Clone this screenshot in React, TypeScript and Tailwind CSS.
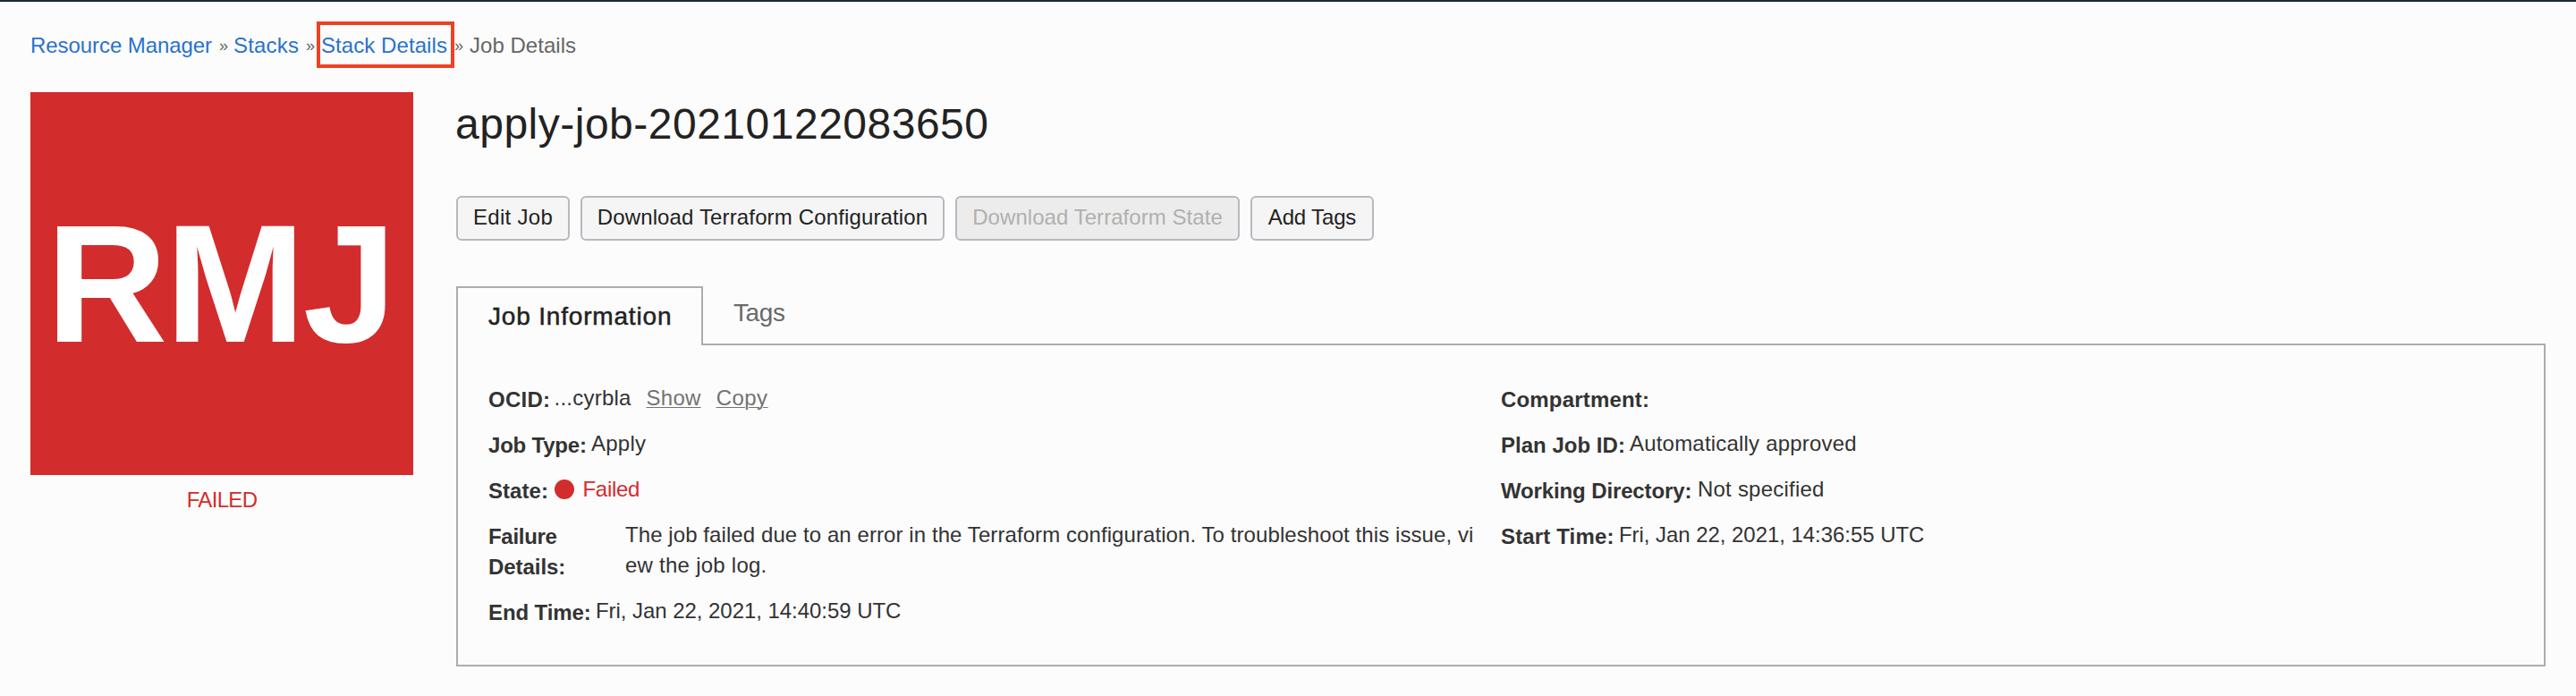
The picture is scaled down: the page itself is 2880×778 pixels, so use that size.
import React from "react";

function Separator() {
  return <span className="text-[18px]">»</span>;
}

function Breadcrumb() {
  return (
    <nav className="ml-[34px] mt-8 grid h-[34px] grid-cols-[211px_16px_81px_17px_149px_17px_auto] whitespace-nowrap text-[#666]">
      <a className="tracking-[-0.07px] text-[#2a72cc]">Resource Manager</a>
      <Separator />
      <a className="tracking-[0.19px] text-[#2a72cc]">Stacks</a>
      <Separator />
      <a className="relative tracking-[0.07px] text-[#2a72cc]">
        Stack Details
        <span className="absolute -left-[5px] -top-2.5 h-[52px] w-[154px] border-4 border-[#ee4124]" />
      </a>
      <Separator />
      <span className="tracking-[0.03px]">Job Details</span>
    </nav>
  );
}

function Button({ label, className, disabled }: { label: string; className: string; disabled?: boolean }) {
  const tone = disabled ? "bg-[#ececec] text-[#b0b0b0]" : "bg-[#f5f5f5] text-[#222]";
  return (
    <button
      disabled={disabled}
      className={`flex h-[50px] items-start justify-center whitespace-nowrap rounded-[6px] border-2 border-[#b5bac0] pt-[5px] ${tone} ${className}`}
    >
      {label}
    </button>
  );
}

function Row({ label, labelClass, children }: { label: React.ReactNode; labelClass: string; children?: React.ReactNode }) {
  return (
    <div className="flex pb-[15px]">
      <div className={`shrink-0 whitespace-nowrap pt-0.5 font-bold ${labelClass}`}>{label}</div>
      <div className="whitespace-nowrap">{children}</div>
    </div>
  );
}

export default function App() {
  return (
    <div className="h-[778px] w-[2880px] overflow-hidden border-t-2 border-[#1f2a37] bg-[#fcfcfc] font-['Liberation_Sans',Arial,sans-serif] text-[24px] leading-[34px] text-[#333]">
      <Breadcrumb />
      <main className="mt-[35px] flex gap-12 pl-[34px] pr-[34px]">
        <aside className="w-[428px] shrink-0">
          <div className="flex h-[428px] items-center bg-[#d32c2c] pl-[17.5px]">
            <span className="text-[188px] font-bold leading-[200px] tracking-[-2.6px] text-white">RMJ</span>
          </div>
          <div className="mt-[11px] text-center tracking-[-0.67px] text-[#d32c2c]">FAILED</div>
        </aside>

        <section className="min-w-0 flex-1">
          <h1 className="-ml-px mt-[6px] text-[48px] leading-[60px] tracking-[0.5px] text-[#222]">
            apply-job-20210122083650
          </h1>

          <div className="mt-[50px] flex gap-3">
            <Button label="Edit Job" className="w-[127px] tracking-[0.3px]" />
            <Button label="Download Terraform Configuration" className="w-[407px] tracking-[0.14px]" />
            <Button label="Download Terraform State" className="w-[318px] tracking-[0.05px]" disabled />
            <Button label="Add Tags" className="w-[138px] tracking-[-0.15px]" />
          </div>

          <div className="mt-[51px] flex">
            <div className="relative -mb-0.5 h-[66px] w-[276px] border-2 border-b-0 border-[#adadad] bg-[#fcfcfc] pl-[34px] pt-[14px] text-[28px] leading-[36px] tracking-[0.82px] text-[#222] [-webkit-text-stroke:0.5px_#222]">
              Job Information
            </div>
            <div className="pl-[34px] pt-3 text-[28px] leading-[36px] tracking-[-0.38px] text-[#6a6a6a]">Tags</div>
          </div>

          <div className="flex h-[361px] border-2 border-[#adadad] pl-[34px] pt-[42px]">
            <div className="w-[1132px] shrink-0">
              <Row label="OCID:" labelClass="w-[73.5px] tracking-[0.25px]">
                <div className="flex">
                  <span className="w-[103px] tracking-[0.23px]">...cyrbla</span>
                  <a className="mr-[17px] tracking-[0.27px] text-[#737373] underline decoration-1 underline-offset-2">Show</a>
                  <a className="tracking-[0.49px] text-[#737373] underline decoration-1 underline-offset-2">Copy</a>
                </div>
              </Row>
              <Row label="Job Type:" labelClass="w-[115px] tracking-[-0.2px]">
                <span className="tracking-[0.24px]">Apply</span>
              </Row>
              <Row label="State:" labelClass="w-[74px] tracking-[0.06px]">
                <div className="flex text-[#d32c2c]">
                  <span className="mr-[9.5px] mt-[6px] size-[22px] rounded-full bg-[#d32c2c]" />
                  <span className="tracking-[-0.3px]">Failed</span>
                </div>
              </Row>
              <Row
                label={
                  <>
                    <span className="tracking-[-0.3px]">Failure</span>
                    <br />
                    Details:
                  </>
                }
                labelClass="w-[153px] tracking-[-0.05px]"
              >
                <span className="tracking-[0.08px]">
                  The job failed due to an error in the Terraform configuration. To troubleshoot this issue, vi
                </span>
                <br />
                <span className="tracking-[0.25px]">ew the job log.</span>
              </Row>
              <Row label="End Time:" labelClass="w-[120px] tracking-[-0.1px]">
                <span className="tracking-[-0.05px]">Fri, Jan 22, 2021, 14:40:59 UTC</span>
              </Row>
            </div>
            <div>
              <Row label="Compartment:" labelClass="tracking-[0.18px]" />
              <Row label="Plan Job ID:" labelClass="w-[144px] tracking-[0.02px]">
                <span className="tracking-[0.2px]">Automatically approved</span>
              </Row>
              <Row label="Working Directory:" labelClass="w-[220px] tracking-[-0.13px]">
                <span className="tracking-[0.22px]">Not specified</span>
              </Row>
              <Row label="Start Time:" labelClass="w-[132px] tracking-[0.15px]">
                <span className="tracking-[-0.05px]">Fri, Jan 22, 2021, 14:36:55 UTC</span>
              </Row>
            </div>
          </div>
        </section>
      </main>
    </div>
  );
}
